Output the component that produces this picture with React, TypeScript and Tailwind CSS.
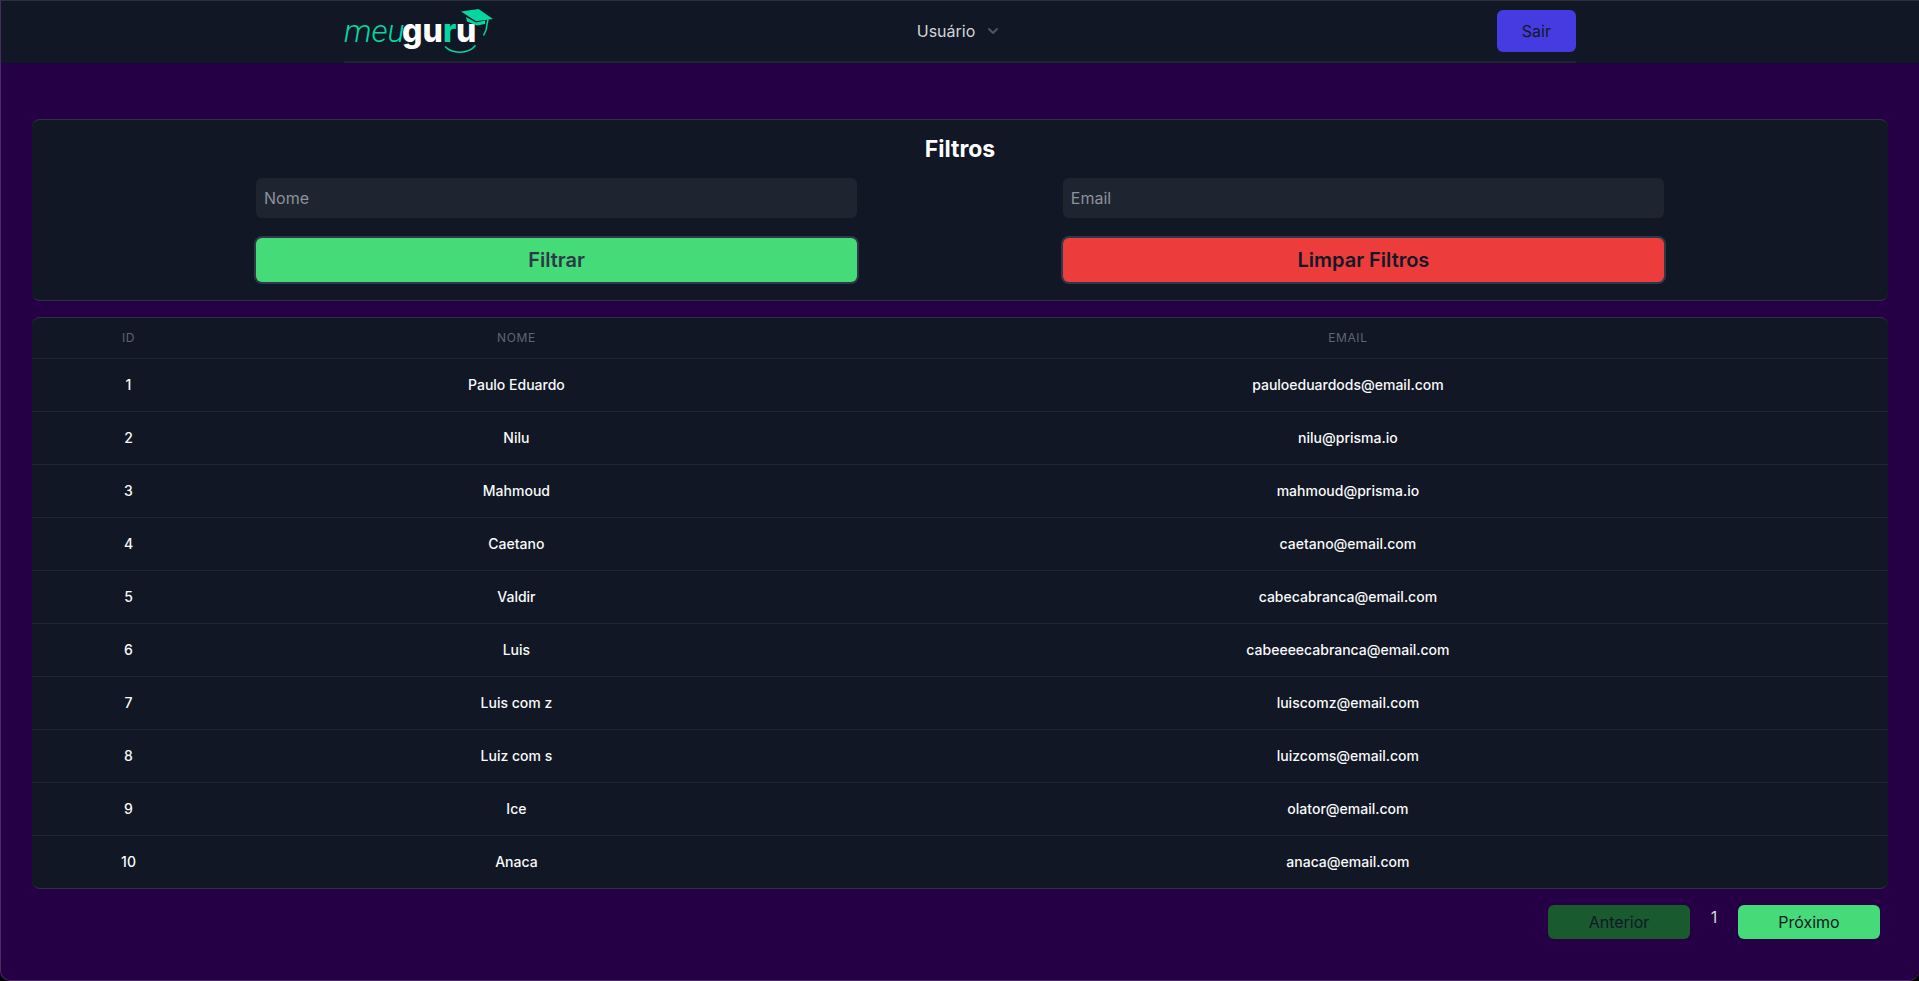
import React from "react";

type User = { id: number; nome: string; email: string };

const users: User[] = [
  { id: 1, nome: "Paulo Eduardo", email: "pauloeduardods@email.com" },
  { id: 2, nome: "Nilu", email: "nilu@prisma.io" },
  { id: 3, nome: "Mahmoud", email: "mahmoud@prisma.io" },
  { id: 4, nome: "Caetano", email: "caetano@email.com" },
  { id: 5, nome: "Valdir", email: "cabecabranca@email.com" },
  { id: 6, nome: "Luis", email: "cabeeeecabranca@email.com" },
  { id: 7, nome: "Luis com z", email: "luiscomz@email.com" },
  { id: 8, nome: "Luiz com s", email: "luizcoms@email.com" },
  { id: 9, nome: "Ice", email: "olator@email.com" },
  { id: 10, nome: "Anaca", email: "anaca@email.com" },
];

function Logo() {
  return (
    <svg width="150" height="44" viewBox="344 9 150 44" className="overflow-visible" role="img" aria-label="meuguru">
      <g fontSize="32">
        <text x="344" y="42" fill="#06d6a0" fontFamily="Roboto, sans-serif" fontStyle="italic" fontWeight="300">meu</text>
        <text x="402" y="42" fill="#ffffff" fontFamily="Inter, sans-serif" fontWeight="800">gu</text>
        <text x="443" y="42" fill="#06d6a0" fontFamily="Inter, sans-serif" fontWeight="800">r</text>
        <text x="456" y="42" fill="#ffffff" fontFamily="Inter, sans-serif" fontWeight="800">u</text>
      </g>
      <path d="M445 46.500C452 54 468 54.500 475.500 45.500" fill="none" stroke="#06d6a0" strokeWidth="1.500" />
      <path d="M466 17L476 22.500L485 20.500V24L477 25.500L467 21.500Z" fill="#06d6a0" />
      <path d="M461 11.500L478.500 9L493 19L476 21.200Z" fill="#06d6a0" />
      <path d="M488 19.500L486 30L483.500 35.500" fill="none" stroke="#06d6a0" strokeWidth="1.500" />
    </svg>
  );
}

function Header() {
  return (
    <header className="bg-[#111724] px-6">
      <div className="mx-auto grid max-w-[1232px] grid-cols-[1fr_auto_1fr] items-center border-b-2 border-[#1d2530] py-2">
        <a href="#inicio" className="justify-self-start">
          <Logo />
        </a>
        <button type="button" className="flex items-center gap-2 text-base text-[#d1d5db]">
          Usuário
          <svg className="h-5 w-5 text-[#4b5563]" viewBox="0 0 20 20" fill="currentColor" aria-hidden="true">
            <path
              fillRule="evenodd"
              clipRule="evenodd"
              d="M5.293 7.293a1 1 0 011.414 0L10 10.586l3.293-3.293a1 1 0 111.414 1.414l-4 4a1 1 0 01-1.414 0l-4-4a1 1 0 010-1.414z"
            />
          </svg>
        </button>
        <button type="button" className="justify-self-end rounded-md bg-[#463be0] px-[25px] py-[9px] text-base text-[#111827]">
          Sair
        </button>
      </div>
    </header>
  );
}

function Filters() {
  const field =
    "h-10 w-full rounded-md bg-[#1f2530] px-2 text-base text-[#d1d5db] placeholder:text-[#8b919d] outline-none";
  const action = "h-11 w-full rounded-md text-xl font-semibold ring-2 ring-[#2d3848]";
  return (
    <form
      className="rounded-lg border-y border-[#2b3644] bg-[#111724] pt-3 pb-[18px]"
      onSubmit={(e) => e.preventDefault()}
    >
      <h2 className="text-center text-[23px] leading-[34px] font-bold text-white">Filtros</h2>
      <div className="mt-3 grid grid-cols-2 gap-x-[14.6%] gap-y-5 px-56">
        <input aria-label="Nome" placeholder="Nome" className={field} />
        <input aria-label="Email" placeholder="Email" className={field} />
        <button type="submit" className={action + " bg-[#44db78] text-[#2d3848]"}>
          Filtrar
        </button>
        <button type="reset" className={action + " bg-[#ed3c3c] text-[#111827]"}>
          Limpar Filtros
        </button>
      </div>
    </form>
  );
}

function UsersTable() {
  return (
    <div className="overflow-hidden rounded-lg border-y border-[#2b3644] bg-[#111724]">
      <table className="w-full table-fixed text-center">
        <colgroup>
          <col className="w-[10.4%]" />
          <col className="w-[31.4%]" />
          <col />
        </colgroup>
        <thead>
          <tr className="text-xs tracking-wider text-[#5f6673] uppercase">
            <th scope="col" className="px-6 py-3 font-normal">ID</th>
            <th scope="col" className="px-6 py-3 font-normal">Nome</th>
            <th scope="col" className="px-6 py-3 font-normal">Email</th>
          </tr>
        </thead>
        <tbody>
          {users.map((u) => (
            <tr key={u.id} className="border-t border-[#1e2631] text-sm font-medium text-[#f9fafb]">
              <td className="px-6 py-4">{u.id}</td>
              <td className="px-6 py-4">{u.nome}</td>
              <td className="px-6 py-4">{u.email}</td>
            </tr>
          ))}
        </tbody>
      </table>
    </div>
  );
}

function Pagination() {
  return (
    <nav aria-label="Paginação" className="flex justify-end px-2 text-base">
      <button type="button" disabled className="w-[142px] rounded-md bg-[#195a2e] py-[5px] text-[#111827]">
        Anterior
      </button>
      <span className="w-12 text-center text-[#d1d5db]">1</span>
      <button type="button" className="w-[142px] rounded-md bg-[#44db78] py-[5px] text-[#111827]">
        Próximo
      </button>
    </nav>
  );
}

export default function App() {
  return (
    <div className="flex min-h-screen bg-black font-['Inter',sans-serif]">
      <div className="flex-1 overflow-hidden rounded-b-[10px] border border-r-0 border-t-[#2c303c] border-b-[#4a2a64] border-l-[#4a2a64] bg-[#260044]">
        <Header />
        <main className="flex flex-col gap-4 px-[31px] pt-14 pb-10">
          <Filters />
          <UsersTable />
          <Pagination />
        </main>
      </div>
    </div>
  );
}
